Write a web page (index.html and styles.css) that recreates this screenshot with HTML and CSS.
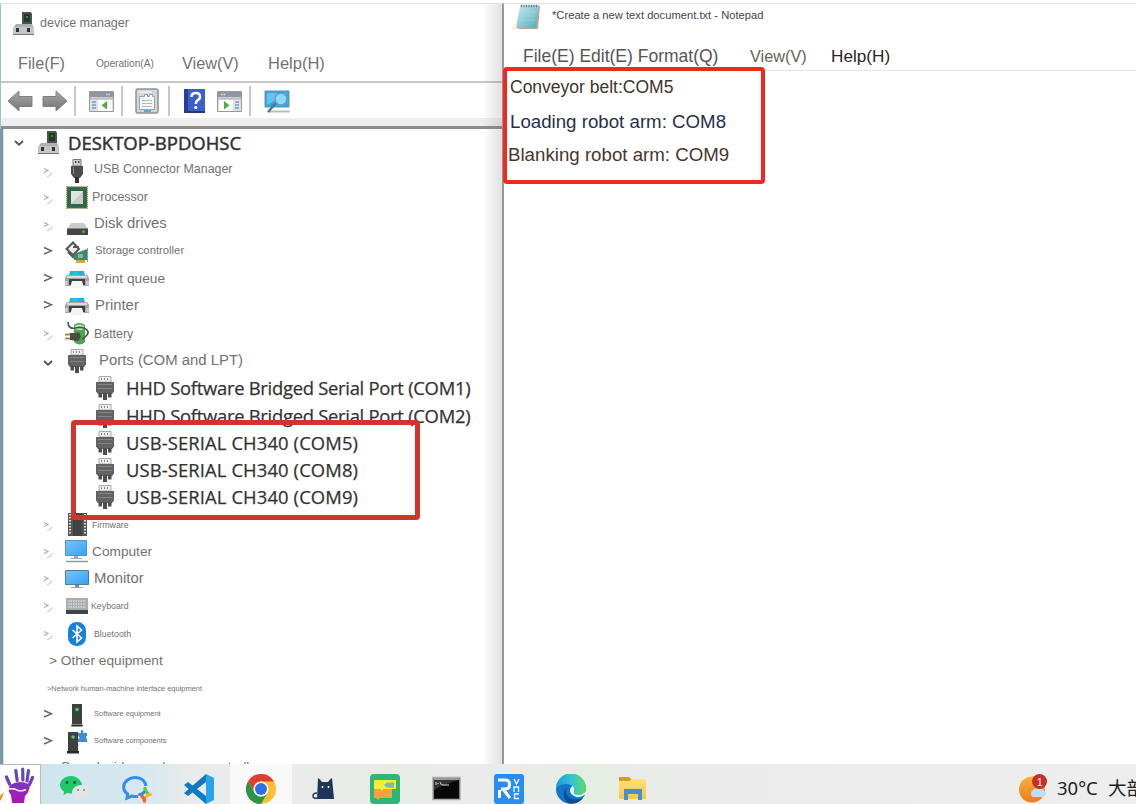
FILE: index.html
```html
<!DOCTYPE html>
<html lang="en">
<head>
<meta charset="utf-8">
<title>Device manager and Notepad</title>
<link rel="stylesheet" href="styles.css">
</head>
<body>
<svg class="defs" width="0" height="0">
  <defs>
    <linearGradient id="gGrey" x1="0" y1="0" x2="0" y2="1"><stop offset="0" stop-color="#a8a8a8"/><stop offset="1" stop-color="#747474"/></linearGradient>
    <linearGradient id="gBlue" x1="0" y1="0" x2="1" y2="1"><stop offset="0" stop-color="#7cc4fb"/><stop offset="1" stop-color="#2fa4f4"/></linearGradient>
    <linearGradient id="gPad" x1="0" y1="0" x2="1" y2="1"><stop offset="0" stop-color="#cdeef6"/><stop offset="1" stop-color="#4fa9bd"/></linearGradient>
    <linearGradient id="gHand" gradientUnits="userSpaceOnUse" x1="0" y1="4" x2="0" y2="38"><stop offset="0" stop-color="#4f56b8"/><stop offset="1" stop-color="#b80fb8"/></linearGradient>
    <linearGradient id="gEdge" x1="0" y1="0" x2="1" y2="0"><stop offset="0" stop-color="#1b9ade"/><stop offset=".5" stop-color="#35c1d6"/><stop offset="1" stop-color="#5fdc62"/></linearGradient>
    <linearGradient id="gSun" x1="0" y1="0" x2="0" y2="1"><stop offset="0" stop-color="#f4b23a"/><stop offset="1" stop-color="#ef7a20"/></linearGradient>
    <linearGradient id="gFolder" x1="0" y1="0" x2="0" y2="1"><stop offset="0" stop-color="#ffdf7a"/><stop offset="1" stop-color="#f7c64b"/></linearGradient>
    <symbol id="pc" viewBox="0 0 21 24"><path d="M9 0h9l1 2v10H9z" fill="#4a544c"/><path d="M11 2h6v8h-6z" fill="#1d3b26"/><path d="M13 4h2v2h-2z" fill="#3e8452"/><path d="M3 12h16l2 4v7H0v-7z" fill="#aeb0b2"/><path d="M0 15h21v8H0z" fill="#c4c6c7"/><path d="M3 16h3v4H3zM14 16h3v4h-3z" fill="#333"/><path d="M0 22.500h21" stroke="#777"/></symbol>
    <symbol id="usb" viewBox="0 0 14 24"><path d="M3 .500h8V7H3z" fill="#ccc" stroke="#777"/><path d="M5 2h1.500v2H5zM8 2h1.500v2H8z" fill="#555"/><path d="M1 7h12v8l-3 4H4l-3-4z" fill="#4c4c4c"/><path d="M3.500 8v7" stroke="#888"/><path d="M5 18h4v6H5z" fill="#333"/></symbol>
    <symbol id="port" viewBox="0 0 18 24"><path d="M3 .500h12V6H3z" fill="#ededed" stroke="#aaa"/><path d="M5 2h1v2H5zM8 2h1v2H8zM11 2h1v2h-1z" fill="#888"/><path d="M0 6h18v9.500L16 18H2l-2-2.500z" fill="#636363"/><path d="M2 8.500h14M2 12.500h14" stroke="#858585"/><path d="M2.500 17h3.500v4.500H2.500zM7 17h4v7H7zM12 17h3.500v4.500H12z" fill="#4d4d4d"/></symbol>
    <symbol id="cpu" viewBox="0 0 22 23"><rect x=".7" y=".7" width="20.600" height="21.600" fill="#35694a" stroke="#a3a25a" stroke-width="1.400" stroke-dasharray="1 1"/><rect x="1.500" y="1.500" width="19" height="20" fill="#326749"/><path d="M5 5h12v13H5z" fill="#dfe4df"/><path d="M17 5v13H5z" fill="#c8cfca"/></symbol>
    <symbol id="disk" viewBox="0 0 21 14"><path d="M4 1h13l4 6H0z" fill="#c9cacc"/><path d="M0 6.500h21V13H0z" fill="#444"/><path d="M0 6.500h21" stroke="#888"/><circle cx="16.500" cy="9.700" r="1.300" fill="#4fc552"/></symbol>
    <symbol id="storage" viewBox="0 0 24 23"><path d="M8 1.500L1.500 8 8 14l6-6z" fill="#eee" stroke="#555" stroke-width="2"/><path d="M8 6h6M3 11l6 6" stroke="#555" stroke-width="2"/><path d="M9 13l13-5v11H9z" fill="#388b67"/><path d="M13 13h5v4h-5z" fill="#90b4a0"/><path d="M11 19h9v3h-9z" fill="#dfa62b"/><path d="M22.500 7v14" stroke="#999"/></symbol>
    <symbol id="printer" viewBox="0 0 24 17"><path d="M5 0h14l1 5H4z" fill="#35a9cf"/><path d="M8 0h6l-1 4H7z" fill="#1ec3e2"/><path d="M2 4h20l2 3v8H0V7z" fill="#a2a6a9"/><path d="M2 5h20v2H2z" fill="#dadddf"/><path d="M4 8h16v6H4z" fill="#3e4244"/><path d="M7 10h10l2 7H5z" fill="#f4f4f4"/><path d="M0 10h3v4H0zM21 10h3v4h-3z" fill="#c7cacc"/></symbol>
    <symbol id="battery" viewBox="0 0 24 25"><path d="M9 4q5-4 11 0v17q-5 5-11 0z" fill="#46a94a"/><path d="M10 5q4-3 9 0v3q-4 2-9 0z" fill="#c9e7c9"/><path d="M3 1c0 5 3 7 7 6s9-1 12 2-1 7-5 9" fill="none" stroke="#505050" stroke-width="1.700"/><path d="M5 12h6l3-1 2 5-3 4-8-1z" fill="#4c4c44"/><path d="M0 13.500h5M0 17.500h5" stroke="#ab8b4d" stroke-width="2"/></symbol>
    <symbol id="chip" viewBox="0 0 19 23"><path d="M0 0h19v23H0z" fill="#555"/><path d="M5 0h9v23H5z" fill="#424242"/><path d="M2 1v21M17 1v21" stroke="#ddd" stroke-width="2" stroke-dasharray="1.500 1.500"/></symbol>
    <symbol id="computer" viewBox="0 0 24 23"><path d="M.500.500h21v15H.500z" fill="url(#gBlue)" stroke="#5a91b8"/><path d="M9 16h4v2H9z" fill="#aaa"/><path d="M6 18.500h11" stroke="#8cadbb"/><path d="M1 21.500h22" stroke="#8f999f" stroke-width="1.500"/></symbol>
    <symbol id="monitor" viewBox="0 0 24 19"><path d="M.500.500h23v14H.500z" fill="url(#gBlue)" stroke="#557a94"/><path d="M10 15h4v2h-4z" fill="#888"/><path d="M6 17.500h12" stroke="#8cadbb"/></symbol>
    <symbol id="keyboard" viewBox="0 0 22 16"><path d="M0 0h22v12H0z" fill="#a9adb0"/><path d="M2 3h18M2 6h18M2 9h18" stroke="#dde0e2" stroke-width="1.300" stroke-dasharray="1.500 1"/><path d="M0 12h22v4H0z" fill="#414547"/></symbol>
    <symbol id="bluetooth" viewBox="0 0 18 24"><rect width="18" height="24" rx="8.500" fill="#1780dc"/><path d="M4.500 8l9 8-4.500 4V4l4.500 4-9 8" fill="none" stroke="#fff" stroke-width="1.600"/></symbol>
    <symbol id="tower" viewBox="0 0 12 23"><path d="M1 0h10v20H1z" fill="#3d4140"/><path d="M1 20h10l1 2.500H0z" fill="#292b2b"/><path d="M0 20.500h12" stroke="#aaa" stroke-width=".7"/><circle cx="6" cy="5.500" r="1.800" fill="#50cf5b"/></symbol>
    <symbol id="towerpiece" viewBox="0 0 20 24"><path d="M1 2h10v19H1z" fill="#3d4140"/><path d="M0 21h12v2.500H0z" fill="#292b2b"/><circle cx="6" cy="7" r="1.800" fill="#50cf5b"/><path d="M11 3h3q-1-3 1-3t1 3h4v3q-2 1 0 3v3h-9V9q3-1 0-3z" fill="#3d8fd1"/></symbol>
    <symbol id="dim" viewBox="0 0 12 12"><path d="M2 1.500l4 2-4 2" fill="none" stroke="#aaa" stroke-width="1.100"/><path d="M5 9.500q3 0 5-4" fill="none" stroke="#ccc" stroke-width="1.100"/></symbol>
    <symbol id="right" viewBox="0 0 12 12"><path d="M2 2.500l7.500 3.300L2 9" fill="none" stroke="#666" stroke-width="1.400"/></symbol>
    <symbol id="down" viewBox="0 0 12 12"><path d="M2 4l4 3.700L10 4" fill="none" stroke="#555" stroke-width="1.900"/></symbol>
    <symbol id="arrow" viewBox="0 0 26 22"><path d="M1 11L12 1v5.500h13v10H12V21z" fill="url(#gGrey)" stroke="#808080"/></symbol>
    <symbol id="panel" viewBox="0 0 25 21"><path d="M.500.500h24v20H.500z" fill="#dfe2e4" stroke="#999"/><path d="M1 1h23v5H1z" fill="#8d96a0"/><path d="M17 3.500h5" stroke="#dfe3e6" stroke-width="1.500" stroke-dasharray="1.500 1"/><path d="M1 6.500h23v2H1z" fill="#b9bec2"/><path d="M9 9h14v11H9z" fill="#fff"/><path d="M3 11h4M3 14h4M3 17h4" stroke="#6ea1cf" stroke-width="1.500"/><path d="M18 10v8.500l-5.500-4.200z" fill="#4fae37"/></symbol>
  </defs>
</svg>

<div class="desktop">
  <section class="devices">
    <div class="devices-head">
      <header class="titlebar"><svg class="title-icon" width="21" height="24"><use href="#pc"/></svg><span class="device-title">device manager</span></header>
      <nav class="device-menu"><span class="m-file">File(F)</span><span class="m-op">Operation(A)</span><span class="m-view">View(V)</span><span class="m-help">Help(H)</span></nav>
      <div class="toolbar">
        <svg class="t-back" width="26" height="22"><use href="#arrow"/></svg>
        <svg class="t-next flip" width="26" height="22"><use href="#arrow"/></svg>
        <i class="sep s1"></i>
        <svg class="t-panel" width="25" height="21"><use href="#panel"/></svg>
        <i class="sep s2"></i>
        <svg class="t-prop" width="24" height="26" viewBox="0 0 24 26"><rect x="1" y="1" width="22" height="24" rx="2" fill="#d2d6d8" stroke="#8f9496" stroke-width="1.500"/><path d="M4 4h13" stroke="#fff"/><path d="M4.500 8.500h5V6.500h3v2h2v-2h3v2h2v13h-15z" fill="#f6f7f8" stroke="#9da3a7"/><path d="M7 12.500h10M7 15.500h10M7 18.500h10" stroke="#b3b8bb"/><path d="M9 23h7" stroke="#3fb4db" stroke-width="2"/></svg>
        <i class="sep s3"></i>
        <svg class="t-help" width="21" height="26" viewBox="0 0 21 26"><path d="M0 1h21v24H0z" fill="#3e5fc7"/><path d="M0 1h4v24H0z" fill="#253f96"/><path d="M4 24h17" stroke="#23377c" stroke-width="2"/><path d="M7.500 9q0-4 4.300-4t4.200 3.700q0 2.300-2.500 3.700-1.700 1-1.700 3.600" fill="none" stroke="#fff" stroke-width="2.500"/><circle cx="11.800" cy="19.500" r="1.600" fill="#fff"/></svg>
        <svg class="t-panel2 flip" width="25" height="21"><use href="#panel"/></svg>
        <i class="sep s4"></i>
        <svg class="t-scan" width="27" height="25" viewBox="0 0 27 25"><path d="M1 2h24v16H1z" fill="#39a7e2" stroke="#6b91a6"/><path d="M3 4h20L3 16z" fill="#64c3ef"/><path d="M4 22.500h22" stroke="#b4bfc5" stroke-width="2"/><path d="M12 14L4 23" stroke="#55758b" stroke-width="2.500"/><circle cx="17" cy="10" r="6" fill="#8dd7f7" stroke="#5a9fc6" stroke-width="1.500"/></svg>
      </div>
      <div class="strip"></div>
    </div>
    <div class="tree">
      <div class="row root"><svg class="chev" width="12" height="12"><use href="#down"/></svg><span class="ico"><svg width="21" height="24"><use href="#pc"/></svg></span><b class="label seg desk">DESKTOP-BPDOHSC</b></div>
      <div class="row"><svg class="chev dim" width="12" height="12"><use href="#dim"/></svg><span class="ico"><svg width="14" height="24"><use href="#usb"/></svg></span><span class="label f124 up2">USB Connector Manager</span></div>
      <div class="row"><svg class="chev dim" width="12" height="12"><use href="#dim"/></svg><span class="ico"><svg width="22" height="23"><use href="#cpu"/></svg></span><span class="label f124 l92 up1">Processor</span></div>
      <div class="row"><svg class="chev dim" width="12" height="12"><use href="#dim"/></svg><span class="ico low"><svg width="21" height="14"><use href="#disk"/></svg></span><span class="label f149 up2">Disk drives</span></div>
      <div class="row"><svg class="chev solid" width="12" height="12"><use href="#right"/></svg><span class="ico"><svg width="24" height="23"><use href="#storage"/></svg></span><span class="label f113 l95 up2">Storage controller</span></div>
      <div class="row"><svg class="chev solid" width="12" height="12"><use href="#right"/></svg><span class="ico"><svg width="24" height="17"><use href="#printer"/></svg></span><span class="label f137 l95">Print queue</span></div>
      <div class="row"><svg class="chev solid" width="12" height="12"><use href="#right"/></svg><span class="ico"><svg width="24" height="17"><use href="#printer"/></svg></span><span class="label f149 l95 up2">Printer</span></div>
      <div class="row"><svg class="chev dim" width="12" height="12"><use href="#dim"/></svg><span class="ico"><svg width="24" height="25"><use href="#battery"/></svg></span><span class="label f124">Battery</span></div>
      <div class="row"><svg class="chev dim" width="12" height="12"><use href="#down"/></svg><span class="ico"><svg width="18" height="24"><use href="#port"/></svg></span><span class="label f149 l99 up1">Ports (COM and LPT)</span></div>
      <div class="row child"><span class="ico"><svg width="18" height="24"><use href="#port"/></svg></span><span class="label seg hhd">HHD Software Bridged Serial Port (COM1)</span></div>
      <div class="row child"><span class="ico"><svg width="18" height="24"><use href="#port"/></svg></span><span class="label seg hhd">HHD Software Bridged Serial Port (COM2)</span></div>
      <div class="row child"><span class="ico"><svg width="18" height="24"><use href="#port"/></svg></span><span class="label seg ch">USB-SERIAL CH340 (COM5)</span></div>
      <div class="row child"><span class="ico"><svg width="18" height="24"><use href="#port"/></svg></span><span class="label seg ch">USB-SERIAL CH340 (COM8)</span></div>
      <div class="row child"><span class="ico"><svg width="18" height="24"><use href="#port"/></svg></span><span class="label seg ch">USB-SERIAL CH340 (COM9)</span></div>
      <div class="row"><svg class="chev dim" width="12" height="12"><use href="#dim"/></svg><span class="ico"><svg width="19" height="23"><use href="#chip"/></svg></span><span class="label f88 l92">Firmware</span></div>
      <div class="row"><svg class="chev dim" width="12" height="12"><use href="#dim"/></svg><span class="ico"><svg width="24" height="23"><use href="#computer"/></svg></span><span class="label f137 l92">Computer</span></div>
      <div class="row"><svg class="chev dim" width="12" height="12"><use href="#dim"/></svg><span class="ico"><svg width="24" height="19"><use href="#monitor"/></svg></span><span class="label f149 up1">Monitor</span></div>
      <div class="row"><svg class="chev dim" width="12" height="12"><use href="#dim"/></svg><span class="ico"><svg width="22" height="16"><use href="#keyboard"/></svg></span><span class="label f88 l91">Keyboard</span></div>
      <div class="row"><svg class="chev dim" width="12" height="12"><use href="#dim"/></svg><span class="ico"><svg width="18" height="24"><use href="#bluetooth"/></svg></span><span class="label f88">Bluetooth</span></div>
      <div class="row plain"><span class="label f137 other">&gt; Other equipment</span></div>
      <div class="row plain"><span class="label net">&gt;Network human-machine interface equipment</span></div>
      <div class="row"><svg class="chev solid" width="12" height="12"><use href="#right"/></svg><span class="ico"><svg width="12" height="23"><use href="#tower"/></svg></span><span class="label f75 up1">Software equipment</span></div>
      <div class="row"><svg class="chev solid" width="12" height="12"><use href="#right"/></svg><span class="ico"><svg width="20" height="24"><use href="#towerpiece"/></svg></span><span class="label f75 up1">Software components</span></div>
      <div class="row plain"><span class="label sound">Sound, video and game controllers</span></div>
    </div>
    <div class="edge-shade"></div>
    <div class="mark mark-ports"></div>
  </section>

  <section class="notepad">
    <header class="note-title"><svg width="25" height="26" viewBox="0 0 25 26"><path d="M5 2h19l-2 23H2z" fill="#b9a98b"/><path d="M4 1h19l-3 23H0z" fill="url(#gPad)"/><path d="M5 2h17" stroke="#5e737a" stroke-width="2.500" stroke-dasharray="1 1.500"/><path d="M5 8h15M4 12h15M4 16h15" stroke="#a5d9e4" stroke-width=".7"/></svg><span>*Create a new text document.txt - Notepad</span></header>
    <nav class="note-menu"><span class="n-file">File(E) Edit(E) Format(Q)</span><span class="n-view">View(V)</span><span class="n-help">Help(H)</span></nav>
    <div class="note-text">
      <p class="belt">Conveyor belt:COM5</p>
      <p class="load">Loading robot arm: COM8</p>
      <p class="blank">Blanking robot arm: COM9</p>
    </div>
    <div class="mark mark-note"></div>
  </section>
</div>

<footer class="taskbar">
  <div class="start"><svg width="40" height="40" viewBox="0 0 40 40"><g fill="none" stroke="url(#gHand)" stroke-width="3.200" stroke-linecap="round"><path d="M6.500 12l3 7M15.800 5.500l1.400 10M22.700 4l.2 11M28.500 5.500L27 16M32.500 12.500l-3 7"/></g><path d="M10 20q8-5 16-2l4 2q-1 8-5 11l-1 7H12l-1-8q-4-4-1-10z" fill="url(#gHand)"/><path d="M9 24q6-1 9 1.500 4 1 8-1" fill="none" stroke="#fff" stroke-width="1.400"/><path d="M0 31l4-4-2 6-2 3z" fill="#f08a2b"/></svg></div>
  <div class="apps">
    <div class="app"><svg width="30" height="30" viewBox="0 0 30 30"><path d="M11 2C5 2 0 6 0 11c0 3 1.500 5 4 6.700L3.500 21l4-2q2 .6 5 .4C18 19 22 15 22 11S17 2 11 2z" fill="#20c76b"/><circle cx="7" cy="8.500" r="1.400" fill="#155c39"/><circle cx="14.500" cy="8.500" r="1.400" fill="#155c39"/><path d="M21 11c-5 0-9 3.300-9 7.300s4 7.400 9 7.400q2 0 4-.7l3 1.600-.6-2.800Q30 21.500 30 18.300C30 14.300 26 11 21 11z" fill="#e3e4e5"/><circle cx="18" cy="16" r="1.100" fill="#888"/><circle cx="24" cy="16" r="1.100" fill="#888"/></svg></div>
    <div class="app"><svg width="30" height="30" viewBox="0 0 30 30"><path d="M24 12C23 6 18 3.500 13 3.500S1.700 7 1.700 13c0 3 1.600 5.500 4 7L5 24l5-2q3 1 6 .3" fill="none" stroke="#2f8df0" stroke-width="3"/><g fill="none" stroke-width="2.200" stroke-linecap="round"><path d="M23 14.500q0 3 2.500 4.500" stroke="#6ac43b" stroke-width="3.500"/><path d="M28.500 20.500q-3 0-4.500 2.500" stroke="#f8b526" stroke-width="3"/><path d="M22.500 27q0-3-2.500-4.500" stroke="#ec6831" stroke-width="3.500"/><path d="M17.500 20.500q3 0 4.500-2.500" stroke="#2f8df0" stroke-width="3"/></g></svg></div>
    <div class="app"><svg width="30" height="30" viewBox="0 0 30 30"><path d="M22 0l8 4v22l-8 4z" fill="#2aa3ea"/><path d="M22 0v8L4 22l-4-3z" fill="#1678b8"/><path d="M22 30v-8L4 8l-4 3z" fill="#087cc7"/></svg></div>
    <div class="app current"><svg width="30" height="30" viewBox="0 0 30 30"><circle cx="15" cy="15" r="15" fill="#fac02e"/><path d="M2 7.500A15 15 0 0 1 28 7.500H15a7.500 7.500 0 0 0-6.500 11.300z" fill="#dc3f32"/><path d="M2 7.500a15 15 0 0 0 13 22.500l6.500-11.200a7.500 7.500 0 0 1-13 0z" fill="#279649"/><circle cx="15" cy="15" r="7.500" fill="#fff"/><circle cx="15" cy="15" r="6" fill="#2b70e4"/></svg></div>
    <div class="app"><svg width="30" height="30" viewBox="0 0 30 30"><path d="M10 4q2 1 4 4h6q2-3 4-4l2 21H9z" fill="#1d3557"/><path d="M10 24q-5 1-5-2t4-3" fill="none" stroke="#1d3557" stroke-width="1.500"/><circle cx="14.500" cy="13" r="1" fill="#fff"/><circle cx="20.500" cy="13" r="1" fill="#fff"/></svg></div>
    <div class="app"><svg width="30" height="30" viewBox="0 0 30 30"><rect width="30" height="30" rx="4" fill="#2fb577"/><path d="M4 6h22v9H14l-2 2-2-2H4z" fill="#f5ec36"/><path d="M4 15h6l2 2 2-2h8v9H10l-2 2-2-2H4z" fill="#f3a344"/><path d="M14 11l3-2.500h7v5h-7z" fill="#78b9af"/></svg></div>
    <div class="app"><svg width="30" height="30" viewBox="0 0 30 30"><path d="M1 3.500h27v22H1z" fill="#080808" stroke="#a9abb0" stroke-width="1.500"/><path d="M2 4h25v2H2z" fill="#999"/><path d="M2 6h25Q12 10 2 16z" fill="#333"/><path d="M4 8v3M6 9v1M8 8l1.500 3M10 11h7" stroke="#ddd" stroke-width="1"/></svg></div>
    <div class="app"><svg width="30" height="30" viewBox="0 0 30 30"><rect width="30" height="30" rx="3" fill="#288cf3"/><path d="M4 6h7.500q4 0 4 4.500t-4 4.500H7M5.500 16v8M9 15l7 9" fill="none" stroke="#fff" stroke-width="3"/><path d="M20 5l2.500 5L25 5M20 18v-5h4.500v5M25 20h-4.500v4.500H25" fill="none" stroke="#fff" stroke-width="1.300"/></svg></div>
    <div class="app"><svg width="30" height="30" viewBox="0 0 30 30"><circle cx="15" cy="15" r="15" fill="#1275c8"/><path d="M0 15A15 15 0 0 1 30 14c0 5-4 7-8 7-4 0-5-1-4-3 2-3-2-8-7-8Q3 10 0 15z" fill="url(#gEdge)"/><path d="M11 13c-4 7 3 16 16 11-5 7-17 8-19-1q-1-6 3-10z" fill="#114d93"/><path d="M17 12c-4 1-5 9 4 11q4 1 9-3v-3q-3 4-8 4-5 0-4-3 1-3-1-6z" fill="#edf1ee"/></svg></div>
    <div class="app"><svg width="30" height="30" viewBox="0 0 30 30"><path d="M1 3h10l3 3-3 4H1z" fill="#d99b1c"/><path d="M1 7h10l3-2h14v20H1z" fill="url(#gFolder)"/><path d="M6 26V15h18v11h-4v-6h-10v6z" fill="#3c94d2"/></svg></div>
  </div>
  <div class="weather"><svg width="30" height="30" viewBox="0 0 30 30"><circle cx="13" cy="15.500" r="13" fill="url(#gSun)"/><path d="M14 23a4 4 0 0 1 0-7q2-3 6-1 4-1 5 2 3 1 2 4-1 2-4 2z" fill="#c4dcfb"/><circle cx="20.500" cy="7.500" r="7.500" fill="#c42f27"/><text x="18" y="11.500" class="badge">1</text></svg><span class="temp">30°C</span><span class="sky">大部</span></div>
</footer>
</body>
</html>
```
FILE: styles.css
```css
* { box-sizing: border-box; }
body { margin: 0; width: 1136px; height: 804px; overflow: hidden; display: flex; flex-direction: column; background: #fff; font-family: "Liberation Sans", Arial, sans-serif; color: #727272; white-space: nowrap; }
.defs { position: absolute; }
svg { display: block; flex: none; }
p { margin: 0; }
.desktop { height: 764px; padding-top: 3px; display: flex; }
.devices { position: relative; width: 504px; height: 761px; border-top: 1px solid #e2e2e2; border-right: 2px solid #999; overflow: hidden; }
.devices-head { height: 125px; border-left: 1px solid #94c6d2; }
.titlebar { display: flex; height: 41px; padding: 8px 0 0 12px; gap: 6px; }
.device-title { font-size: 12.500px; line-height: 22px; }
.device-menu { height: 38px; padding-left: 17px; display: flex; align-items: center; border-bottom: 2px solid #c5c7c8; }
.m-file { width: 78px; font-size: 16.300px; }
.m-op { width: 86px; font-size: 10.100px; }
.m-view { width: 86px; font-size: 16.300px; }
.m-help { font-size: 16.500px; }
.toolbar { display: flex; align-items: center; height: 35px; padding: 1px 0 0 6px; }
.flip { transform: scaleX(-1); }
.t-next { margin-left: 9px; }
.sep { width: 2px; height: 30px; background: #c6c8c9; }
.s1 { margin-left: 6px; }
.t-panel { margin-left: 13px; }
.s2 { margin-left: 7px; }
.t-prop { margin-left: 12px; }
.s3 { margin-left: 9px; }
.t-help { margin-left: 14px; }
.t-panel2 { margin-left: 12px; }
.s4 { margin-left: 7px; }
.t-scan { margin-left: 13px; }
.strip { height: 11px; background: #eee; border-bottom: 3px solid #8b8b8b; }
.tree { padding-top: .7px; height: 636px; border-left: 3px solid #7899a5; box-shadow: inset 1px 0 #ddd; }
.row { display: flex; align-items: center; height: 27.240px; padding-left: 39px; }
.row.root { padding-left: 10px; }
.row.child { padding-left: 89px; }
.chev { width: 12px; }
.chev.solid { margin-top: -3px; }
.chev.dim { margin-top: 4px; }
.ico { width: 26px; margin-left: 10px; display: flex; justify-content: center; }
.low { padding-top: 8px; }
.child .ico { margin-left: 0; }
.label { margin-left: 4px; line-height: 20px; }
.l91 { margin-left: 1px; }
.l92 { margin-left: 2px; }
.l95 { margin-left: 5px; }
.l99 { margin-left: 9px; }
.up1 { padding-bottom: 2px; }
.up2 { padding-bottom: 4px; }
.f149 { font-size: 14.900px; }
.f137 { font-size: 13.700px; }
.f124 { font-size: 12.400px; }
.f113 { font-size: 11.300px; }
.f88 { font-size: 8.800px; }
.f75 { font-size: 7.500px; }
.seg { font-family: "Open Sans", "Noto Sans", sans-serif; color: #333; -webkit-text-stroke: .25px #333; }
.desk { margin-left: 7px; font-size: 18.500px; font-weight: 500; -webkit-text-stroke: .5px #333; }
.root .ico { margin-left: 10px; }
.hhd, .ch { margin-left: 8px; font-size: 18.400px; }
.hhd { letter-spacing: -.27px; }
.ch { letter-spacing: .12px; }
.plain { padding-left: 40px; }
.other { margin-left: 6px; }
.net { font-size: 7.470px; padding-top: 2px; }
.sound { margin-left: 18px; padding-bottom: 5px; font-size: 13.400px; }
.edge-shade { position: absolute; top: 0; bottom: 0; right: 0; width: 20px; background: linear-gradient(90deg, rgba(120,120,120,0), rgba(120,120,120,.22)); }
.mark { position: absolute; border-radius: 4px; }
.mark-ports { left: 71px; top: 416px; width: 349px; height: 100px; border: 5px solid #d0352c; }
.notepad { position: relative; width: 632px; border-top: 1px solid #e2e2e2; }
.note-title { height: 31px; padding-left: 12px; display: flex; gap: 11px; font-size: 11.200px; line-height: 23px; color: #454258; }
.note-menu { height: 36px; padding: 10px 0 0 19px; display: flex; line-height: 22px; border-bottom: 1px solid #e6e6e6; }
.n-file { width: 227px; font-size: 17.500px; color: #555; }
.n-view { width: 81px; font-size: 16.300px; color: #665f58; }
.n-help { font-size: 17.200px; color: #2a2525; }
.note-text { padding: 0 0 0 6px; line-height: 33.500px; }
.belt { font-size: 17.500px; color: #40342f; }
.load { font-size: 18.700px; color: #26304e; }
.blank { margin-left: -2px; font-size: 18.700px; color: #4a352b; }
.mark-note { left: -1px; top: 63px; width: 262px; height: 117px; border: 4px solid #ee2a20; }
.taskbar { height: 40px; display: flex; background: linear-gradient(90deg, #cfe5ee 40px, #d6e8ef 140px, #e8ebec 190px, #ebebeb 290px, #e5ede3 390px, #ebebeb 470px, #e5eee3 590px, #ebebeb 690px, #eee 1136px); }
.start { flex: none; width: 41px; background: #fff; border-top: 1px solid #bbb; border-right: 1px solid #bbb; overflow: hidden; }
.apps { display: flex; flex: none; padding-left: 3px; }
.app { flex: none; width: 62px; display: flex; justify-content: center; padding-top: 10px; }
.app.current { background: #f9f9f9; }
.weather { display: flex; flex: none; margin-left: 355px; padding-top: 10px; color: #222; font-family: "Noto Sans", "Noto Sans CJK SC", sans-serif; font-size: 18.500px; line-height: 27px; }
.temp { margin-left: 8px; width: 51px; }
.sky { font-family: "Noto Sans CJK SC", sans-serif; }
.badge { font: 10px "Liberation Sans", sans-serif; fill: #fff; }
```
